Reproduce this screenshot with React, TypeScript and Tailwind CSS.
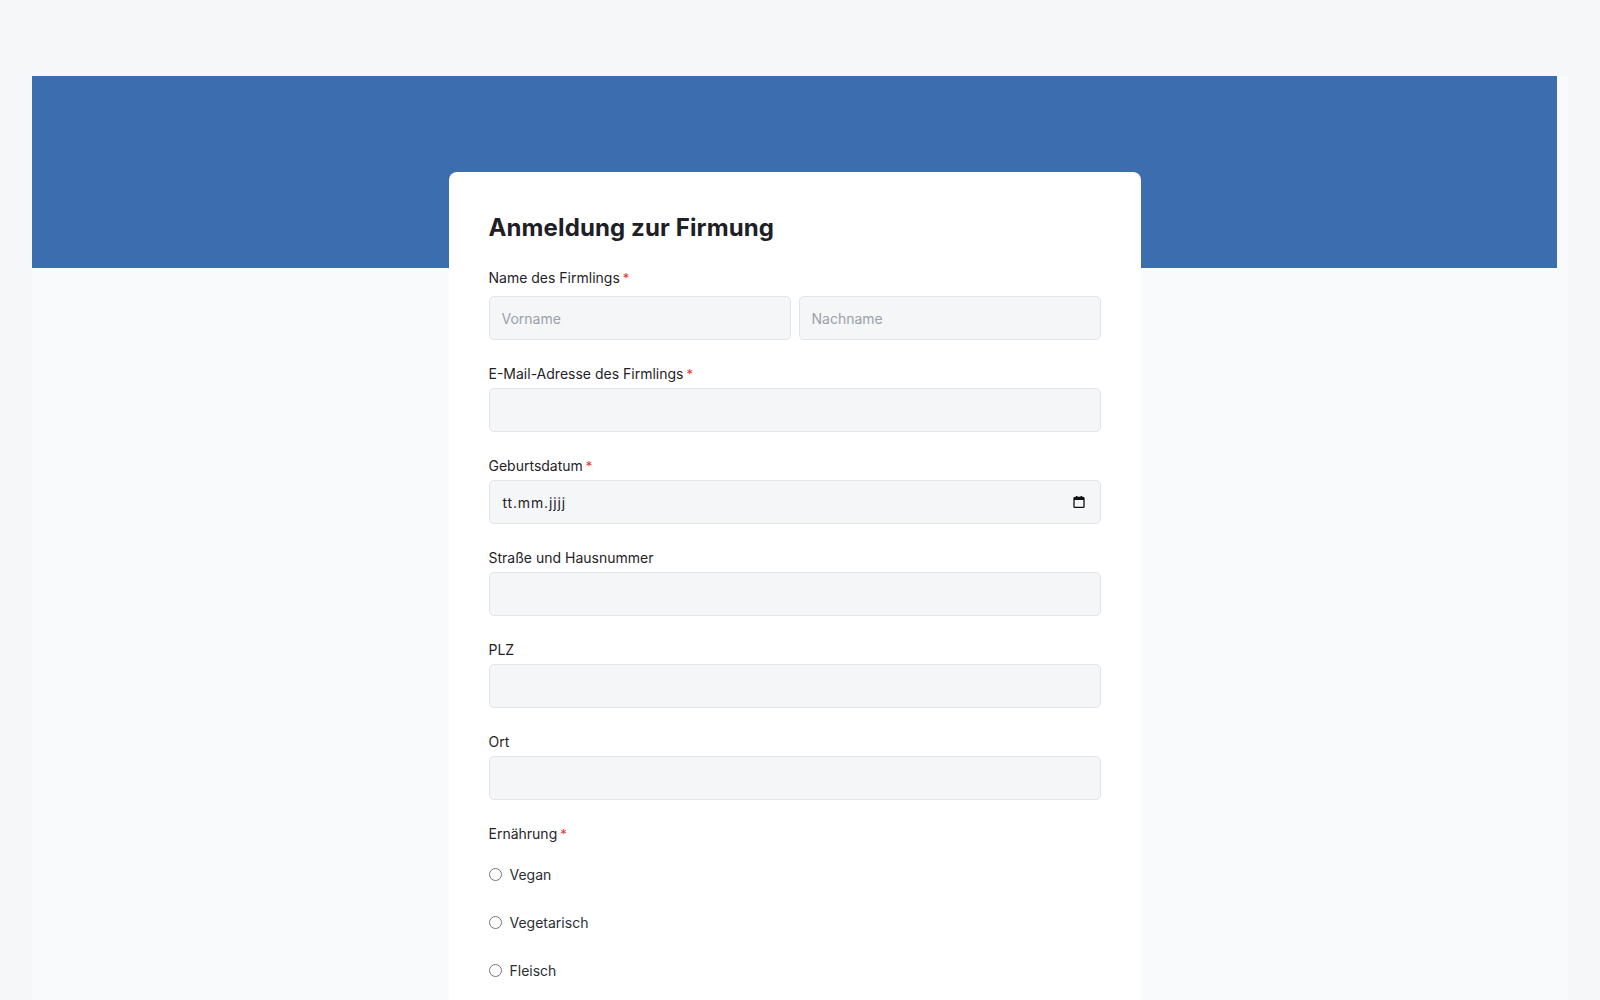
import React from "react";

function Required() {
  return <span className="ml-[3px] text-[13px] text-[#e3342f]">*</span>;
}

function Label({ text, required }: { text: string; required?: boolean }) {
  return (
    <label className="block h-5 text-[14px] leading-5 font-normal text-[#1f2329]">
      {text}
      {required ? <Required /> : null}
    </label>
  );
}

const inputCls =
  "h-[44px] w-full rounded-[5px] border border-[#e1e4e8] bg-[#f5f6f8] px-3 text-[14px] text-[#1f2329] placeholder:text-[#9aa1ab] outline-none";

function Field({ label, required, type = "text" }: { label: string; required?: boolean; type?: string }) {
  return (
    <div className="mb-6">
      <Label text={label} required={required} />
      <div className="mt-1">
        <input type={type} className={inputCls} />
      </div>
    </div>
  );
}

export default function App() {
  return (
    <div className="h-[1000px] overflow-hidden bg-[#f6f7f8] pt-[76px]" style={{ fontFamily: "Inter, 'Noto Sans', sans-serif" }}>
      <div className="mx-auto h-[924px] w-[1536px] bg-[#f9fafb]">
        <div className="w-[1525px]">
          {/* Header band */}
          <div className="h-[192px] bg-[#3c6daf]" />

          {/* Form card */}
          <div className="mx-auto -mt-[96px] w-[692px] rounded-lg bg-white px-10 pt-10 pb-10">
            <h1 className="mb-6 h-8 text-[24px] leading-8 font-bold tracking-[0.005em] text-[#1d2025]">
              Anmeldung zur Firmung
            </h1>

            <div className="mb-6">
              <Label text="Name des Firmlings" required />
              <div className="mt-2 flex gap-2">
                <input type="text" placeholder="Vorname" className={inputCls} />
                <input type="text" placeholder="Nachname" className={inputCls} />
              </div>
            </div>

            <Field label="E-Mail-Adresse des Firmlings" required type="email" />

            <div className="mb-6">
              <Label text="Geburtsdatum" required />
              <div className="mt-1 flex h-[44px] w-full items-center justify-between rounded-[5px] border border-[#e1e4e8] bg-[#f5f6f8] pr-[15px] pl-[13px] text-[14px] text-[#1f2329]">
                <span className="tracking-[0.06em]">tt.mm.jjjj</span>
                <svg width="12" height="12" viewBox="0 0 12 12" fill="none">
                  <rect x="1" y="1.5" width="10" height="10" rx="1" stroke="#111" strokeWidth="1.3" />
                  <rect x="1" y="1.5" width="10" height="2.5" fill="#111" />
                  <rect x="3" y="0" width="1.4" height="2" fill="#111" />
                  <rect x="7.6" y="0" width="1.4" height="2" fill="#111" />
                </svg>
              </div>
            </div>

            <Field label="Straße und Hausnummer" />
            <Field label="PLZ" />
            <Field label="Ort" />

            <div>
              <Label text="Ernährung" required />
              <div className="mt-[6px] flex flex-col">
                {["Vegan", "Vegetarisch", "Fleisch"].map((opt) => (
                  <label key={opt} className="flex h-12 items-center gap-[8px] text-[14px] text-[#2b2f36]">
                    <input type="radio" name="ernaehrung" className="m-0 h-[13px] w-[13px]" />
                    {opt}
                  </label>
                ))}
              </div>
            </div>
          </div>
        </div>
      </div>
    </div>
  );
}
